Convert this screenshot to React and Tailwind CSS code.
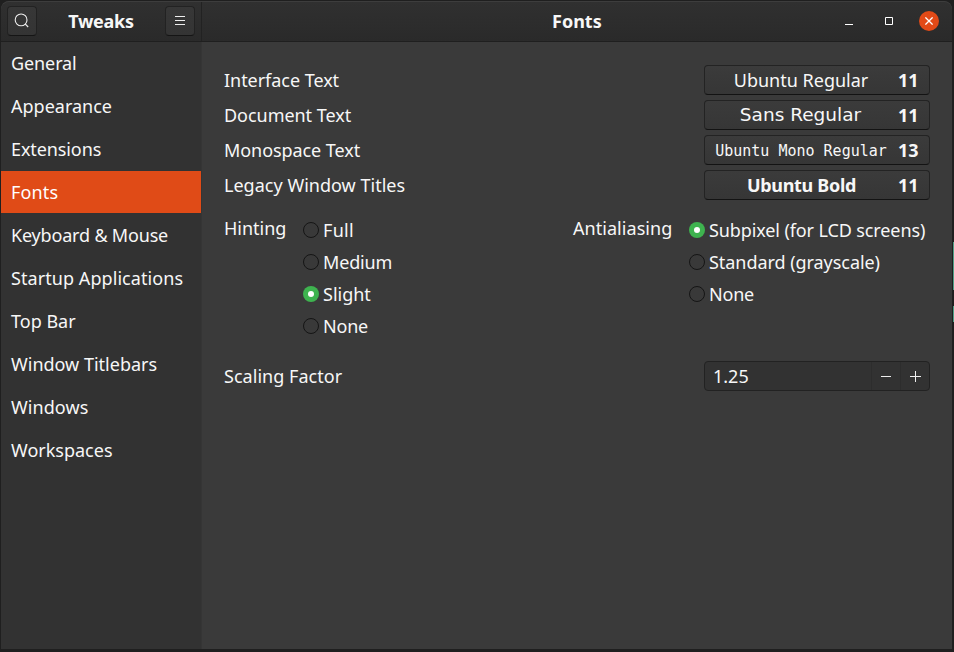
import React from "react";

const pages = [
  ["General", "tracking-[-0.1px]"],
  ["Appearance", ""],
  ["Extensions", "tracking-[-0.1px]"],
  ["Fonts", "tracking-[0.15px]"],
  ["Keyboard & Mouse", "tracking-[-0.18px]"],
  ["Startup Applications", "tracking-[0.07px]"],
  ["Top Bar", ""],
  ["Window Titlebars", ""],
  ["Windows", "tracking-[0.07px]"],
  ["Workspaces", ""],
];

const fonts = [
  { label: "Interface Text", name: "Ubuntu Regular", size: 11, labelStyle: "tracking-[-0.04px]", nameStyle: "ml-[10px]" },
  { label: "Document Text", name: "Sans Regular", size: 11, labelStyle: "tracking-[-0.04px]", nameStyle: "ml-[9px] font-['DejaVu_Sans',sans-serif] text-[18.5px]" },
  { label: "Monospace Text", name: "Ubuntu Mono Regular", size: 13, labelStyle: "tracking-[-0.07px]", nameStyle: "ml-[10px] mt-px font-['DejaVu_Sans_Mono',monospace] text-[15px]" },
  { label: "Legacy Window Titles", name: "Ubuntu Bold", size: 11, labelStyle: "tracking-[0.02px]", nameStyle: "ml-[11px] font-bold tracking-[-0.3px]" },
];

function HeaderButton({ children }) {
  return (
    <button className="mb-px flex h-[30px] w-[30px] items-center justify-center rounded-[4px] border border-[#222] border-b-[#151515] bg-linear-to-b from-[#373737] to-[#343434]">
      {children}
    </button>
  );
}

function Radio({ label, checked, className = "" }) {
  return (
    <label className="flex h-8 items-center">
      {checked ? (
        <span className="flex size-4 items-center justify-center rounded-full bg-[#3eb34f]">
          <span className="size-[6px] rounded-full bg-white" />
        </span>
      ) : (
        <span className="size-4 rounded-full border border-[#151515] bg-[#393939]" />
      )}
      <span className={"ml-1 leading-6 " + className}>{label}</span>
    </label>
  );
}

export default function App() {
  return (
    <div className="flex h-[652px] w-[954px] items-start overflow-hidden bg-[#1f1f1f] pt-px pl-px font-['Noto_Sans','Open_Sans',sans-serif] text-[18px] leading-6 whitespace-nowrap text-[#f7f7f7]">
      <div className="flex h-[648px] w-[951px] shrink-0 flex-col overflow-hidden rounded-t-[8px] bg-[#3a3a3a]">
        <header className="flex h-[41px] shrink-0 rounded-t-[8px] border-t border-b border-t-[#3d3d3d] border-b-[#1f1f1f] bg-linear-to-b from-[#303030] to-[#2a2a2a]">
          <div className="flex w-[201px] items-center justify-between border-r border-[#222] pr-[6px] pl-[6px]">
            <HeaderButton>
              <svg width="16" height="16" viewBox="0 0 16 16" fill="none" stroke="#eee" strokeWidth="1.1">
                <circle cx="7.1" cy="6.9" r="5.9" />
                <path d="M11.2 11l3 3" />
              </svg>
            </HeaderButton>
            <h1 className="pb-[2px] font-bold tracking-[-0.25px]">Tweaks</h1>
            <HeaderButton>
              <svg width="10" height="10" viewBox="0 0 10 10" stroke="#eee">
                <path d="M0 .5h10M0 4.5h10M0 8.5h10" />
              </svg>
            </HeaderButton>
          </div>
          <div className="flex flex-1 items-center">
            <h1 className="ml-[350px] pb-[2px] font-bold">Fonts</h1>
            <div className="mr-[13px] ml-auto flex items-center">
              <svg width="8" height="10" viewBox="0 0 8 10" stroke="#fff">
                <path d="M0 7.5h8" />
              </svg>
              <svg className="mb-[2px] ml-8" width="8" height="8" viewBox="0 0 8 8" fill="none" stroke="#fff">
                <path d="M.5 .5h7v7h-7z" />
              </svg>
              <span className="mb-[2px] ml-[26px] flex size-5 items-center justify-center rounded-full bg-[#e24a17]">
                <svg width="8" height="8" viewBox="0 0 8 8" stroke="#fff" strokeWidth="1.3">
                  <path d="M.4 .4l7.2 7.2M7.6 .4l-7.2 7.2" />
                </svg>
              </span>
            </div>
          </div>
        </header>
        <div className="flex min-h-0 flex-1">
          <nav className="flex w-[201px] shrink-0 flex-col gap-px border-r border-[#353535] bg-[#323232]">
            {pages.map(([name, style]) => (
              <a
                key={name}
                className={"flex h-[42px] items-center pl-[10px] " + (name === "Fonts" ? "bg-[#e04b17] text-white" : "")}
              >
                <span className={style}>{name}</span>
              </a>
            ))}
          </nav>
          <main className="flex flex-1 flex-col pt-[23px] pr-[22px] pl-[22px]">
            <div className="flex flex-col gap-[5px]">
              {fonts.map((f) => (
                <div key={f.label} className="flex h-[30px] items-center justify-between">
                  <span className={f.labelStyle}>{f.label}</span>
                  <button className="flex h-[30px] w-[226px] items-center rounded-[4px] border border-[#232323] border-b-[#131313] bg-linear-to-b from-[#3b3b3b] to-[#363636]">
                    <span className="flex flex-1 justify-center">
                      <span className={f.nameStyle}>{f.name}</span>
                    </span>
                    <span className="w-[42px] pl-[11px] text-left font-bold">{f.size}</span>
                  </button>
                </div>
              ))}
            </div>
            <div className="mt-[14px] flex items-start">
              <span className="mt-[2px] w-[79px]">Hinting</span>
              <div className="w-[270px]">
                <Radio label="Full" className="tracking-[0.3px]" />
                <Radio label="Medium" className="tracking-[-0.15px]" />
                <Radio label="Slight" checked />
                <Radio label="None" className="tracking-[-0.2px]" />
              </div>
              <span className="mt-[2px] w-[116px] tracking-[0.05px]">Antialiasing</span>
              <div>
                <Radio label="Subpixel (for LCD screens)" checked className="tracking-[-0.11px]" />
                <Radio label="Standard (grayscale)" className="tracking-[-0.05px]" />
                <Radio label="None" className="tracking-[-0.2px]" />
              </div>
            </div>
            <div className="mt-[19px] flex items-center justify-between">
              <span className="tracking-[0.04px]">Scaling Factor</span>
              <div className="flex h-[30px] w-[226px] rounded-[4px] border border-[#222] bg-[#323232]">
                <span className="flex w-[166px] items-center pl-[8px]">1.25</span>
                <button className="flex w-[29px] items-center justify-center border-l border-[#2d2d2d]">
                  <svg width="10" height="11" viewBox="0 0 10 11" stroke="#eee">
                    <path d="M0 5.5h10" />
                  </svg>
                </button>
                <button className="flex flex-1 items-center justify-center border-l border-[#2d2d2d]">
                  <svg width="11" height="11" viewBox="0 0 11 11" stroke="#eee">
                    <path d="M0 5.5h11M5.5 0v11" />
                  </svg>
                </button>
              </div>
            </div>
          </main>
        </div>
      </div>
      {/* Sliver of the window behind */}
      <div className="ml-auto flex w-px flex-col gap-4 pt-[241px]">
        <div className="h-12 bg-[#4f9f86]" />
        <div className="h-4 bg-[#4f9f86]" />
      </div>
    </div>
  );
}
